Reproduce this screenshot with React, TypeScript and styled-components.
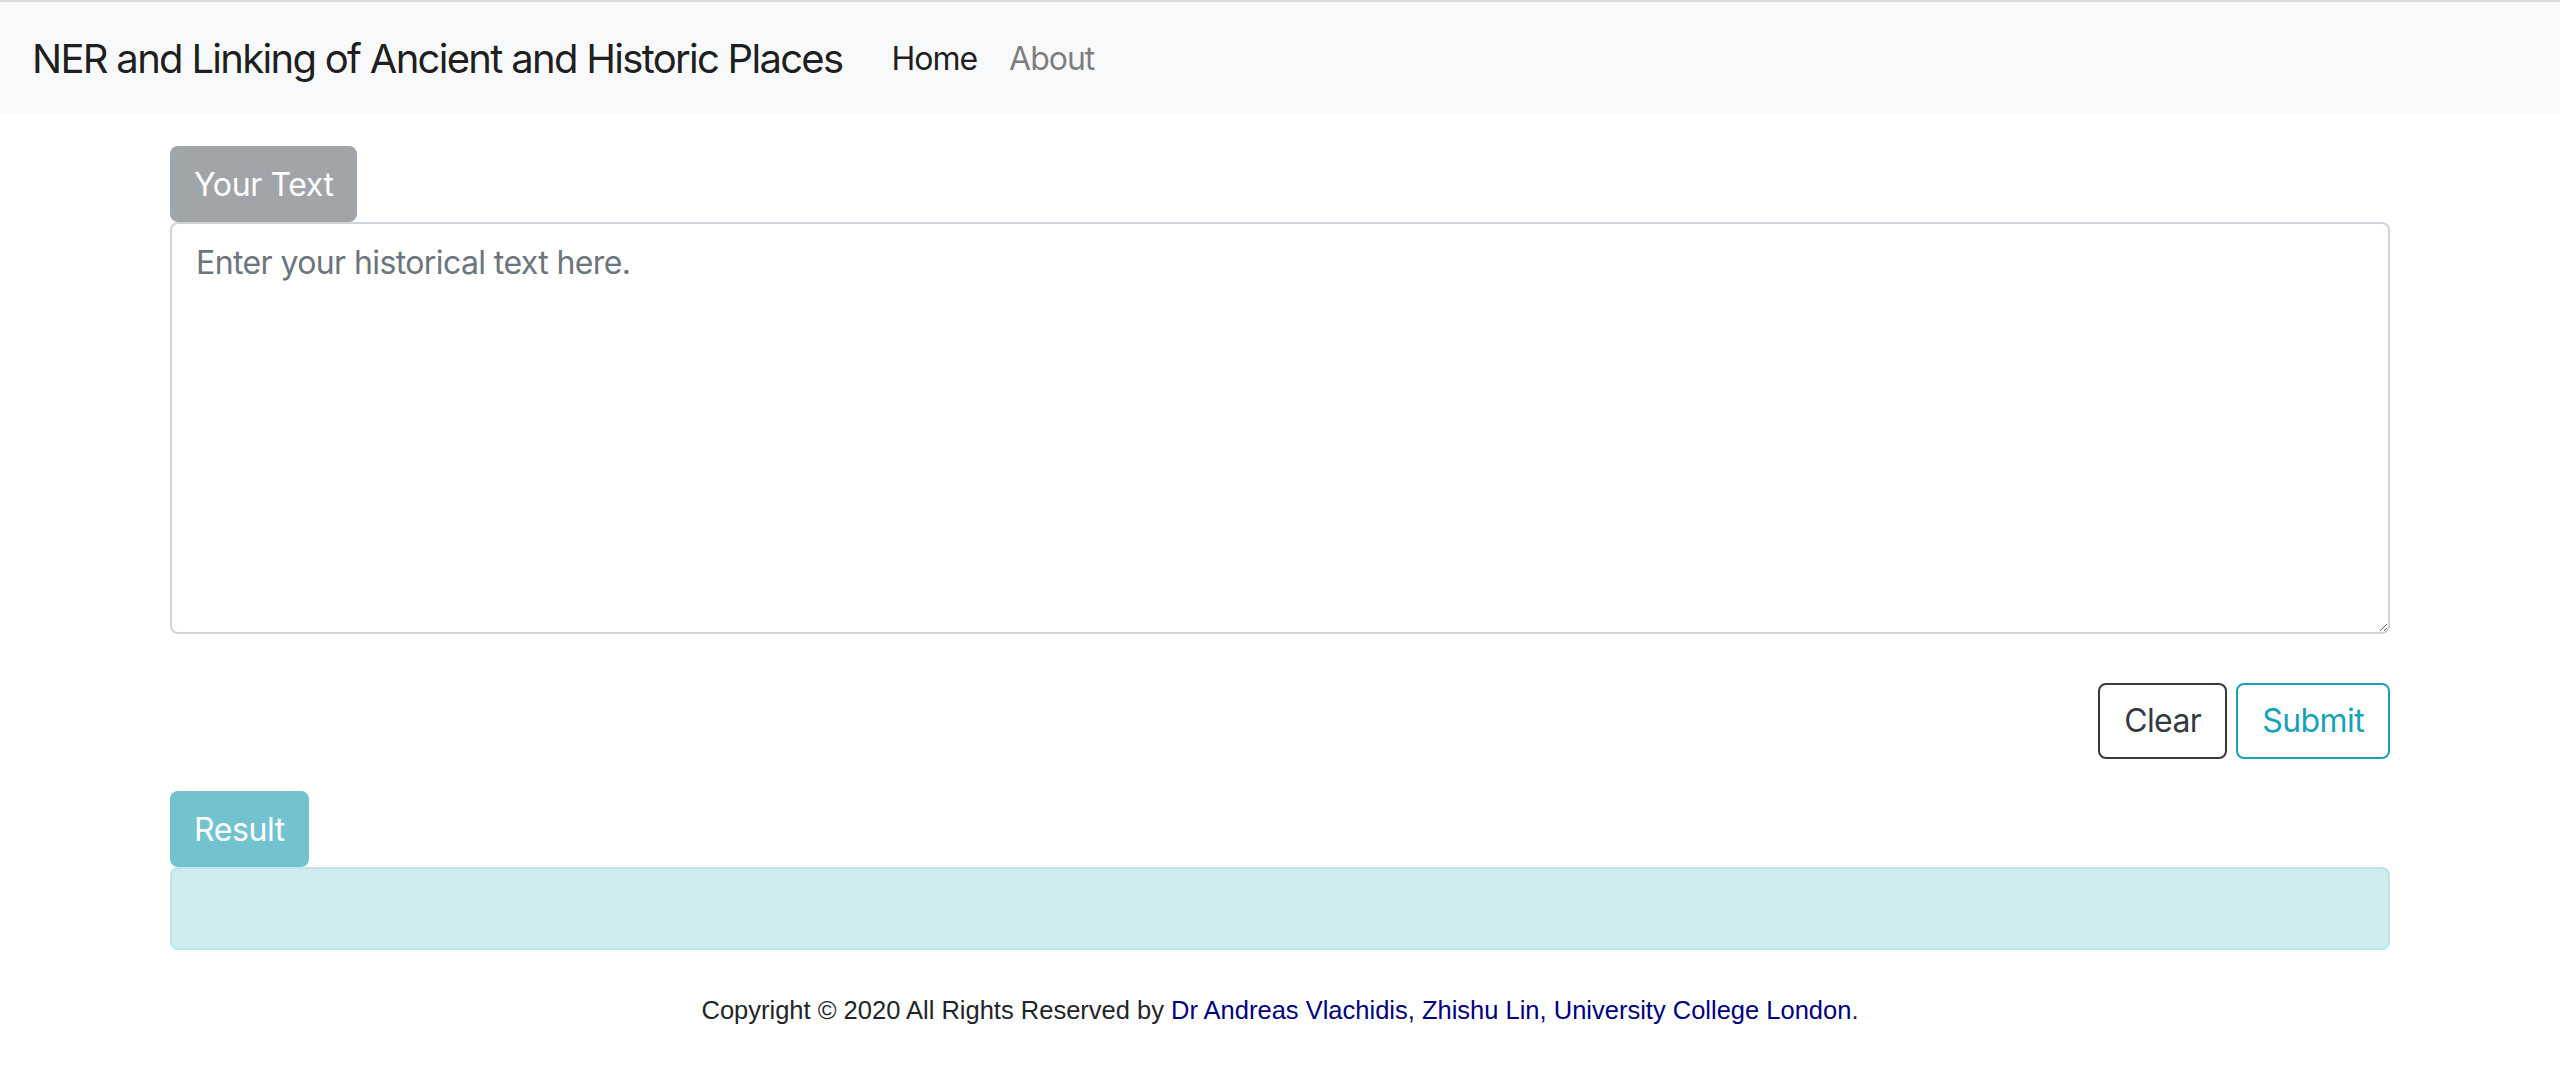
import React from 'react'
import styled, { createGlobalStyle } from 'styled-components'

const GlobalStyle = createGlobalStyle`
    body {
        margin: 0;
        background: #ffffff;
        color: #212529;
        font-family: Inter, "Noto Sans", "Liberation Sans", sans-serif;
        letter-spacing: -0.6px;
    }
    * { box-sizing: border-box; }
`

export default () => {
    return (
        <>
            <GlobalStyle />
            <Navbar>
                <Brand>NER and Linking of Ancient and Historic Places</Brand>
                <NavList>
                    <NavLink $active>Home</NavLink>
                    <NavLink>About</NavLink>
                </NavList>
            </Navbar>
            <Container>
                <Tab $bg="#a0a5aa">Your Text</Tab>
                <TextArea placeholder="Enter your historical text here." />
                <ButtonRow>
                    <OutlineButton $color="#343a40">Clear</OutlineButton>
                    <OutlineButton $color="#17a2b8">Submit</OutlineButton>
                </ButtonRow>
                <Tab $bg="#72c3cf">Result</Tab>
                <ResultBox />
            </Container>
            <Footer>
                Copyright © 2020 All Rights Reserved by{' '}
                <FooterLink href="#">Dr Andreas Vlachidis, Zhishu Lin, University College London</FooterLink>.
            </Footer>
        </>
    )
}

// STYLE PROPERTIES
const Navbar = styled.nav`
    display: flex;
    align-items: center;
    height: 114px;
    padding: 2px 32px 0;
    background: #f8f9fa;
    border-top: 2px solid #d9dadd;
`
const Brand = styled.a`
    font-size: 40px;
    line-height: 60px;
    letter-spacing: -1.7px;
    color: rgba(0, 0, 0, 0.9);
    margin-right: 33px;
    white-space: nowrap;
`
const NavList = styled.div`
    display: flex;
`
const NavLink = styled.a<{ $active?: boolean }>`
    font-size: 32px;
    line-height: 48px;
    letter-spacing: -1px;
    padding: 16px;
    color: ${p => (p.$active ? 'rgba(0, 0, 0, 0.9)' : 'rgba(0, 0, 0, 0.5)')};
`
const Container = styled.main`
    width: 2220px;
    margin: 32px auto 0;
    display: flex;
    flex-direction: column;
`
const Tab = styled.div<{ $bg: string }>`
    align-self: flex-start;
    background: ${p => p.$bg};
    color: #ffffff;
    font-size: 32px;
    line-height: 48px;
    letter-spacing: -0.4px;
    padding: 15px 24px 9px;
    border-radius: 8px;
    height: 76px;
`
const TextArea = styled.textarea`
    display: block;
    width: 100%;
    height: 412px;
    padding: 15px 24px 9px;
    font-family: inherit;
    font-size: 32px;
    line-height: 48px;
    letter-spacing: -0.6px;
    color: #495057;
    border: 2px solid #ced4da;
    border-radius: 8px;
    resize: vertical;
    outline: none;
    &::placeholder {
        color: #6c757d;
    }
`
const ButtonRow = styled.div`
    display: flex;
    justify-content: flex-end;
    gap: 9px;
    margin: 49px 0 32px;
`
const OutlineButton = styled.button<{ $color: string }>`
    font-family: inherit;
    font-size: 32px;
    line-height: 48px;
    letter-spacing: -0.6px;
    padding: 12px 24px;
    height: 76px;
    background: transparent;
    color: ${p => p.$color};
    border: 2px solid ${p => p.$color};
    border-radius: 8px;
`
const ResultBox = styled.div`
    height: 83px;
    background: #d1ecf1;
    border: 2px solid #bee5eb;
    border-radius: 8px;
`
const Footer = styled.footer`
    text-align: center;
    font-family: "Liberation Sans", Arial, sans-serif;
    font-size: 25.5px;
    letter-spacing: 0;
    line-height: 40px;
    margin-top: 40px;
    color: #212529;
`
const FooterLink = styled.a`
    color: #000080;
    text-decoration: none;
`
